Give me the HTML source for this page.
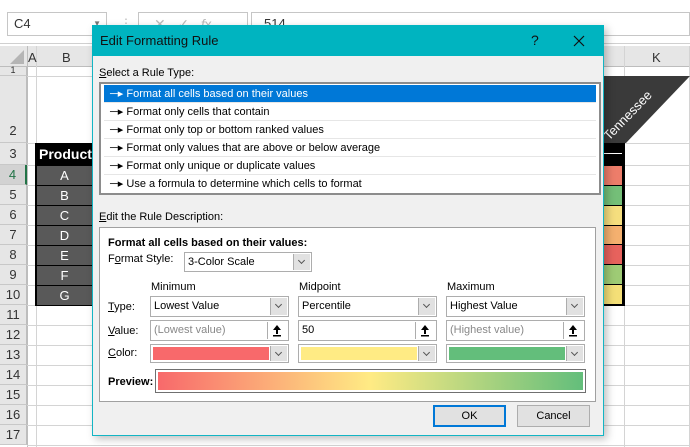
<!DOCTYPE html>
<html><head><style>
*{margin:0;padding:0;box-sizing:border-box}
body{width:690px;height:447px;overflow:hidden;background:#fff;font-family:"Liberation Sans",sans-serif;font-size:11px;position:relative;color:#000}
.a{position:absolute}
.rh{position:absolute;left:0;width:27px;background:#e6e6e6;border-bottom:1px solid #c8c8c8;border-right:1px solid #bdbdbd;text-align:center;font-size:13px;color:#333}
.hl{position:absolute;height:1px;background:#d4d4d4}
.vl{position:absolute;width:1px;background:#d4d4d4}
.item{position:absolute;left:3px;right:3px;height:18px;line-height:19px;padding-left:6px;font-size:11px;border-bottom:1px solid #e6e6e6}
.cb{position:absolute;background:#fff;border:1px solid #adadad;font-size:11px;line-height:18px;padding-left:3px}
.dd{position:absolute;right:1px;top:1px;bottom:1px;width:17px;background:#e1e1e1;border-left:1px solid #adadad}
.dd:after{content:"";position:absolute;left:5px;top:4px;width:4px;height:4px;border-right:1px solid #555;border-bottom:1px solid #555;transform:rotate(45deg)}
.up{position:absolute;right:1px;top:1px;bottom:1px;width:20px;background:#fff;border-left:1px solid #adadad}
u{text-decoration:underline}
</style></head><body>
<div class="a" style="left:0;top:0;width:690px;height:43px;background:#fff"></div>
<div class="a" style="left:7px;top:12px;width:100px;height:24px;border:1px solid #c6c6c6;font-size:13px;line-height:22px;padding-left:6px;color:#333">C4<span style="position:absolute;right:5px;top:0;font-size:8px;color:#777">▼</span></div>
<div class="a" style="left:120px;top:16px;color:#bbb;font-size:12px">⋮</div>
<div class="a" style="left:138px;top:12px;width:110px;height:24px;border:1px solid #c6c6c6;color:#bbb;font-size:14px;line-height:22px;padding-left:15px">✕ &nbsp; ✓ &nbsp; <i>f</i>x</div>
<div class="a" style="left:251px;top:12px;width:439px;height:24px;border:1px solid #c6c6c6;font-size:13px;line-height:22px;padding-left:12px;color:#333">514</div>
<div class="a" style="left:0;top:43px;width:690px;height:1px;background:#d0d0d0"></div>
<div class="a" style="left:0;top:46px;width:690px;height:21px;background:#e6e6e6;border-bottom:1px solid #bdbdbd"></div>
<div class="a" style="left:10px;top:50px;width:0;height:0;border-left:14px solid transparent;border-bottom:14px solid #b5b5b5"></div>
<div class="vl" style="left:27px;top:46px;height:401px;background:#bdbdbd"></div>
<div class="vl" style="left:36px;top:46px;height:401px"></div>
<div class="a" style="left:28px;top:50px;font-size:13px;color:#333">A</div>
<div class="a" style="left:62px;top:50px;font-size:13px;color:#333">B</div>
<div class="vl" style="left:624px;top:46px;height:401px"></div>
<div class="vl" style="left:689px;top:46px;height:401px"></div>
<div class="a" style="left:652px;top:50px;font-size:13px;color:#333">K</div>
<div class="rh" style="top:67px;height:9px;font-size:9px;line-height:6px">1</div>
<div class="rh" style="top:76px;height:67px;line-height:110px">2</div>
<div class="rh" style="top:143px;height:22px;line-height:22px">3</div>
<div class="rh" style="top:165px;height:20px;line-height:20px;background:#d2d2d2;color:#217346;border-right:2px solid #217346">4</div>
<div class="rh" style="top:185px;height:20px;line-height:20px">5</div>
<div class="rh" style="top:205px;height:20px;line-height:20px">6</div>
<div class="rh" style="top:225px;height:20px;line-height:20px">7</div>
<div class="rh" style="top:245px;height:20px;line-height:20px">8</div>
<div class="rh" style="top:265px;height:20px;line-height:20px">9</div>
<div class="rh" style="top:285px;height:20px;line-height:20px">10</div>
<div class="rh" style="top:305px;height:20px;line-height:20px">11</div>
<div class="rh" style="top:325px;height:20px;line-height:20px">12</div>
<div class="rh" style="top:345px;height:20px;line-height:20px">13</div>
<div class="rh" style="top:365px;height:20px;line-height:20px">14</div>
<div class="rh" style="top:385px;height:20px;line-height:20px">15</div>
<div class="rh" style="top:405px;height:20px;line-height:20px">16</div>
<div class="rh" style="top:425px;height:20px;line-height:20px">17</div>
<div class="hl" style="left:27px;top:76px;width:663px"></div>
<div class="hl" style="left:27px;top:143px;width:663px"></div>
<div class="hl" style="left:27px;top:165px;width:663px"></div>
<div class="hl" style="left:27px;top:185px;width:663px"></div>
<div class="hl" style="left:27px;top:205px;width:663px"></div>
<div class="hl" style="left:27px;top:225px;width:663px"></div>
<div class="hl" style="left:27px;top:245px;width:663px"></div>
<div class="hl" style="left:27px;top:265px;width:663px"></div>
<div class="hl" style="left:27px;top:285px;width:663px"></div>
<div class="hl" style="left:27px;top:305px;width:663px"></div>
<div class="hl" style="left:27px;top:325px;width:663px"></div>
<div class="hl" style="left:27px;top:345px;width:663px"></div>
<div class="hl" style="left:27px;top:365px;width:663px"></div>
<div class="hl" style="left:27px;top:385px;width:663px"></div>
<div class="hl" style="left:27px;top:405px;width:663px"></div>
<div class="hl" style="left:27px;top:425px;width:663px"></div>
<div class="hl" style="left:27px;top:445px;width:663px"></div>
<svg class="a" style="left:0;top:0" width="690" height="447"><polygon points="560,76 690,76 626,143 496,143" fill="#3a3a3a"/><text x="0" y="0" transform="translate(609,141) rotate(-46)" fill="#fff" font-family="Liberation Sans" font-size="13">Tennessee</text></svg>
<div class="a" style="left:35px;top:143px;width:590px;height:163px;background:#000"></div>
<div class="a" style="left:39px;top:146px;color:#fff;font-weight:bold;font-size:14px">Product</div>
<div class="a" style="left:604px;top:153px;width:18px;height:1px;background:#fff"></div>
<div class="a" style="left:37px;top:166px;width:55px;height:138px;display:flex;flex-direction:column;gap:1px">
<div style="flex:1;background:#595959;color:#fff;text-align:center;font-size:13px;line-height:19px">A</div>
<div style="flex:1;background:#595959;color:#fff;text-align:center;font-size:13px;line-height:19px">B</div>
<div style="flex:1;background:#595959;color:#fff;text-align:center;font-size:13px;line-height:19px">C</div>
<div style="flex:1;background:#595959;color:#fff;text-align:center;font-size:13px;line-height:19px">D</div>
<div style="flex:1;background:#595959;color:#fff;text-align:center;font-size:13px;line-height:19px">E</div>
<div style="flex:1;background:#595959;color:#fff;text-align:center;font-size:13px;line-height:19px">F</div>
<div style="flex:1;background:#595959;color:#fff;text-align:center;font-size:13px;line-height:19px">G</div>
</div>
<div class="a" style="left:603px;top:166px;width:19px;height:138px;display:flex;flex-direction:column;gap:1px">
<div style="flex:1;background:#ed7d6a"></div><div style="flex:1;background:#74bf78"></div><div style="flex:1;background:#f5de7e"></div><div style="flex:1;background:#f4b06f"></div><div style="flex:1;background:#e7625d"></div><div style="flex:1;background:#9ecb75"></div><div style="flex:1;background:#f4df77"></div>
</div>
<div class="a" style="left:92px;top:25px;width:512px;height:411px;background:#f0f0f0;border:1px solid #13b5c4;box-shadow:3px 3px 8px rgba(0,0,0,.25)"></div>
<div class="a" style="left:92px;top:25px;width:512px;height:31px;background:#00b4c0"></div>
<div class="a" style="left:100px;top:33px;font-size:13px;color:#111">Edit Formatting Rule</div>
<div class="a" style="left:531px;top:32px;font-size:14px;color:#111">?</div>
<svg class="a" style="left:573px;top:35px" width="12" height="12"><path d="M1 1L11 11M11 1L1 11" stroke="#111" stroke-width="1.2"/></svg>
<div class="a" style="left:99px;top:67px"><u>S</u>elect a Rule Type:</div>
<div class="a" style="left:99px;top:82px;width:502px;height:113px;background:#fff;border:2px solid #8c8c8c">
<div class="item" style="top:1px;background:#0078d7;color:#fff">&#x2500;&#x25B8; Format all cells based on their values</div>
<div class="item" style="top:19px">&#x2500;&#x25B8; Format only cells that contain</div>
<div class="item" style="top:37px">&#x2500;&#x25B8; Format only top or bottom ranked values</div>
<div class="item" style="top:55px">&#x2500;&#x25B8; Format only values that are above or below average</div>
<div class="item" style="top:73px">&#x2500;&#x25B8; Format only unique or duplicate values</div>
<div class="item" style="top:91px;border:none">&#x2500;&#x25B8; Use a formula to determine which cells to format</div>
</div>
<div class="a" style="left:99px;top:211px"><u>E</u>dit the Rule Description:</div>
<div class="a" style="left:99px;top:227px;width:497px;height:175px;background:#fff;border:1px solid #a0a0a0"></div>
<div class="a" style="left:108px;top:237px;font-weight:bold">Format all cells based on their values:</div>
<div class="a" style="left:108px;top:253px">F<u>o</u>rmat Style:</div>
<div class="cb" style="left:184px;top:252px;width:128px;height:20px">3-Color Scale<div class="dd"></div></div>
<div class="a" style="left:151px;top:281px">Minimum</div>
<div class="a" style="left:299px;top:281px">Midpoint</div>
<div class="a" style="left:447px;top:281px">Maximum</div>
<div class="a" style="left:108px;top:301px"><u>T</u>ype:</div>
<div class="a" style="left:108px;top:325px"><u>V</u>alue:</div>
<div class="a" style="left:108px;top:347px"><u>C</u>olor:</div>
<div class="cb" style="left:150px;top:296px;width:139px;height:21px">Lowest Value<div class="dd"></div></div>
<div class="cb" style="left:298px;top:296px;width:139px;height:21px">Percentile<div class="dd"></div></div>
<div class="cb" style="left:446px;top:296px;width:139px;height:21px">Highest Value<div class="dd"></div></div>
<div class="cb" style="left:150px;top:320px;width:139px;height:21px;color:#888">(Lowest value)<div class="up"><svg width="18" height="17"><path d="M9 3L5 8H8V12H10V8H13Z" fill="#000"/><rect x="5" y="13" width="8" height="1.5" fill="#000"/></svg></div></div>
<div class="cb" style="left:298px;top:320px;width:139px;height:21px">50<div class="up"><svg width="18" height="17"><path d="M9 3L5 8H8V12H10V8H13Z" fill="#000"/><rect x="5" y="13" width="8" height="1.5" fill="#000"/></svg></div></div>
<div class="cb" style="left:446px;top:320px;width:139px;height:21px;color:#888">(Highest value)<div class="up"><svg width="18" height="17"><path d="M9 3L5 8H8V12H10V8H13Z" fill="#000"/><rect x="5" y="13" width="8" height="1.5" fill="#000"/></svg></div></div>
<div class="cb" style="left:150px;top:344px;width:139px;height:19px;padding:2px"><div style="width:116px;height:13px;background:#f8696b"></div><div class="dd"></div></div>
<div class="cb" style="left:298px;top:344px;width:139px;height:19px;padding:2px"><div style="width:116px;height:13px;background:#ffeb84"></div><div class="dd"></div></div>
<div class="cb" style="left:446px;top:344px;width:139px;height:19px;padding:2px"><div style="width:116px;height:13px;background:#63be7b"></div><div class="dd"></div></div>
<div class="a" style="left:108px;top:376px;font-weight:bold">Preview:</div>
<div class="a" style="left:155px;top:369px;width:431px;height:24px;border:1px solid #707070;padding:2px;background:#fff"><div style="width:100%;height:100%;background:linear-gradient(90deg,#f8696b,#ffeb84 50%,#63be7b)"></div></div>
<div class="a" style="left:433px;top:405px;width:73px;height:22px;border:2px solid #0078d7;background:#e1e1e1;text-align:center;line-height:18px">OK</div>
<div class="a" style="left:517px;top:405px;width:73px;height:22px;border:1px solid #adadad;background:#e1e1e1;text-align:center;line-height:20px">Cancel</div>
</body></html>
